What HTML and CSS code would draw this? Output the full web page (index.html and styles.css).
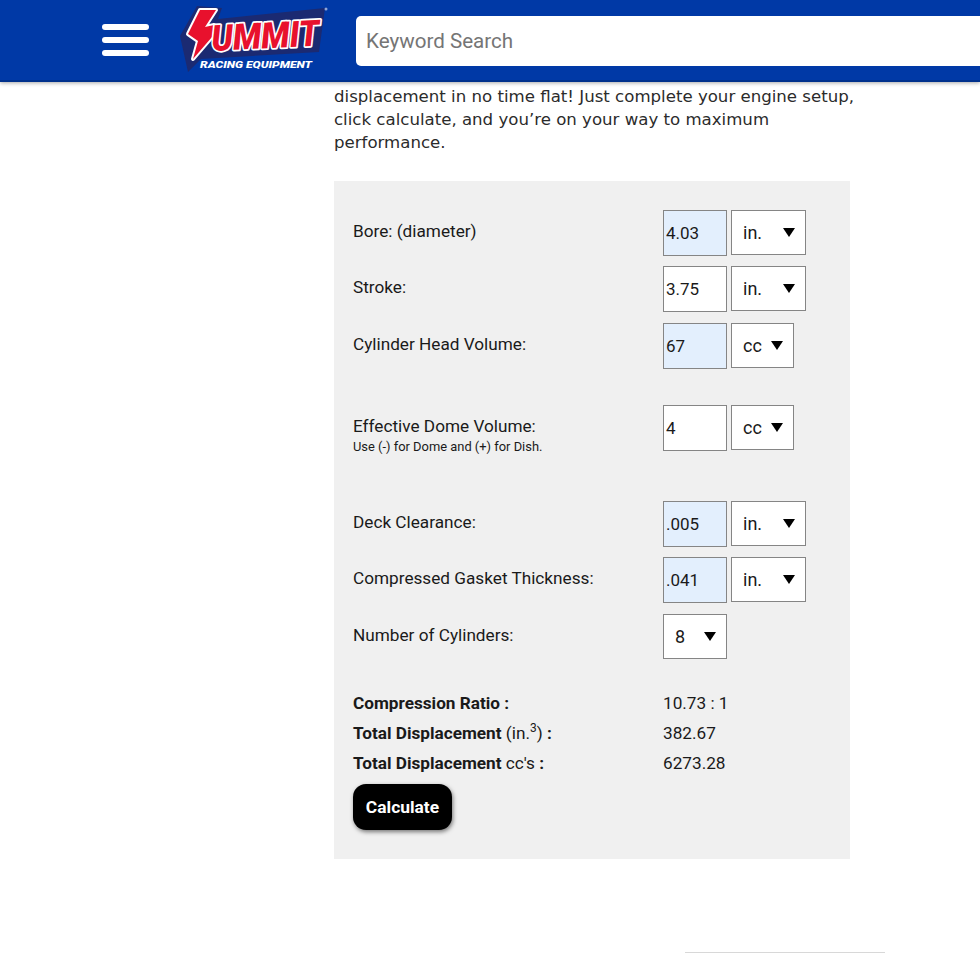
FILE: index.html
```html
<!DOCTYPE html>
<html lang="en">
<head>
    <meta charset="UTF-8">
    <meta name="viewport" content="width=device-width, initial-scale=1.0">
    <title>Compression Ratio Calculator</title>
    <link rel="stylesheet" href="styles.css">
</head>
<body>

<header class="header">
    <div class="menu-icon"><span></span><span></span><span></span></div>
    <svg class="logo" viewBox="178 8 154 68" width="154" height="68" role="img" aria-label="Summit Racing Equipment">
        <polygon fill="#1b2a72" points="197,8 222,10 218,21 325,10 319,54 201,61 188,74 180,38"/>
        <circle fill="#8fa6d8" cx="326" cy="11" r="1.5"/>
        <polygon class="logo-bolt" points="200,12 216,12 205,29 214,27 212,39 193,61 198,43 188,36"/>
        <text class="logo-name" x="212" y="53" textLength="108" lengthAdjust="spacingAndGlyphs" transform="rotate(-3 212 53)">UMMIT</text>
        <text class="logo-tag" x="200" y="70" textLength="112" lengthAdjust="spacingAndGlyphs">RACING EQUIPMENT</text>
    </svg>
    <input class="search" type="text" placeholder="Keyword Search">
</header>

<main class="content">
    <p class="intro">displacement in no time flat! Just complete your engine setup, click calculate, and you’re on your way to maximum performance.</p>

    <form class="calc">
        <div class="row">
            <label class="row-label">Bore: (diameter)</label>
            <input class="num filled" type="text" value="4.03">
            <div class="pick wide"><select><option>in.</option></select></div>
        </div>
        <div class="row">
            <label class="row-label">Stroke:</label>
            <input class="num" type="text" value="3.75">
            <div class="pick wide"><select><option>in.</option></select></div>
        </div>
        <div class="row">
            <label class="row-label">Cylinder Head Volume:</label>
            <input class="num filled" type="text" value="67">
            <div class="pick"><select><option>cc</option></select></div>
        </div>

        <div class="row dome">
            <label class="row-label">Effective Dome Volume:<small>Use (-) for Dome and (+) for Dish.</small></label>
            <input class="num" type="text" value="4">
            <div class="pick"><select><option>cc</option></select></div>
        </div>

        <div class="row">
            <label class="row-label">Deck Clearance:</label>
            <input class="num filled" type="text" value=".005">
            <div class="pick wide"><select><option>in.</option></select></div>
        </div>
        <div class="row">
            <label class="row-label">Compressed Gasket Thickness:</label>
            <input class="num filled" type="text" value=".041">
            <div class="pick wide"><select><option>in.</option></select></div>
        </div>
        <div class="row">
            <label class="row-label">Number of Cylinders:</label>
            <div class="pick cyl"><select><option>8</option></select></div>
        </div>

        <div class="results">
            <div class="result"><span class="result-label"><b>Compression Ratio :</b></span><span>10.73 : 1</span></div>
            <div class="result"><span class="result-label"><b>Total Displacement</b> (in.<sup>3</sup>) <b>:</b></span><span>382.67</span></div>
            <div class="result"><span class="result-label"><b>Total Displacement</b> cc's <b>:</b></span><span>6273.28</span></div>
        </div>

        <button class="calc-btn" type="button">Calculate</button>
    </form>

    <div class="foot-line"></div>
</main>

</body>
</html>
```

FILE: styles.css
```css
* {
    box-sizing: border-box;
}
body {
    margin: 0;
    height: 953px;
    overflow: hidden;
    background: #fff;
    color: #1a1a1a;
    font-family: Roboto, "Liberation Sans", sans-serif;
    font-size: 17.2px;
}
.header {
    height: 82px;
    background: #0039a6;
    border-bottom: 2px solid #00308c;
    box-shadow: 0 1px 4px rgba(0, 0, 0, 0.35);
    display: flex;
    align-items: center;
    padding-left: 102px;
    overflow: hidden;
}
.menu-icon {
    width: 47px;
    display: flex;
    flex-direction: column;
    gap: 7px;
    flex-shrink: 0;
}
.menu-icon span {
    height: 6px;
    background: #fff;
    border-radius: 3px;
}
.logo {
    margin-left: 29px;
    margin-top: -1px;
    flex-shrink: 0;
}
.logo-bolt {
    fill: #e8112d;
    stroke: #fff;
    stroke-width: 4px;
    stroke-linejoin: round;
    paint-order: stroke;
}
.logo-name {
    font-family: Roboto, sans-serif;
    font-size: 36px;
    font-weight: 900;
    font-style: italic;
    fill: #e8112d;
    stroke: #fff;
    stroke-width: 3.5px;
    stroke-linejoin: round;
    paint-order: stroke;
}
.logo-tag {
    font-family: Roboto, sans-serif;
    font-size: 9px;
    font-weight: 900;
    font-style: italic;
    fill: #fff;
}
.search {
    margin-left: 24px;
    margin-top: 2px;
    width: 700px;
    height: 50px;
    flex-shrink: 0;
    border: 0;
    border-radius: 5px;
    background: #fff;
    padding: 0 10px;
    font-family: Roboto, sans-serif;
    font-size: 20.6px;
}
.search::placeholder {
    color: #757575;
    opacity: 1;
}
.content {
    margin-left: 334px;
    width: 516px;
}
.intro {
    margin: 3px 0 26.5px;
    width: 525px;
    font-family: "DejaVu Sans", sans-serif;
    font-size: 16.6px;
    line-height: 23px;
    color: #2b2b2b;
}
.calc {
    height: 678px;
    background: #f0f0f0;
    padding: 29px 19px 0;
}
.row {
    display: flex;
    align-items: flex-start;
    height: 46px;
    margin-bottom: 10.5px;
}
.row.dome {
    margin-top: 36px;
    margin-bottom: 50px;
}
.row-label {
    width: 310px;
    padding-top: 12px;
    line-height: 19px;
}
.row-label small {
    display: block;
    font-size: 12.9px;
    line-height: 21px;
}
.num {
    width: 64px;
    height: 46px;
    border: 1px solid #858585;
    background: #fff;
    padding: 0 2px;
    font-family: Roboto, sans-serif;
    font-size: 17px;
    color: #1a1a1a;
    border-radius: 0;
}
.num.filled {
    background: #e3effd;
}
.pick {
    position: relative;
    width: 63px;
    height: 45px;
    margin-left: 4px;
}
.pick.wide {
    width: 75px;
}
.pick.cyl {
    width: 64px;
    margin-left: 0;
}
.pick select {
    width: 100%;
    height: 100%;
    appearance: none;
    border: 1px solid #858585;
    border-radius: 0;
    background: #fff;
    padding: 0 0 0 11px;
    font-family: Roboto, sans-serif;
    font-size: 18px;
    color: #1a1a1a;
}
.pick::after {
    content: "";
    position: absolute;
    right: 11px;
    top: 18px;
    border-left: 6px solid transparent;
    border-right: 6px solid transparent;
    border-top: 9px solid #000;
}
.results {
    margin-top: 28px;
}
.result {
    display: flex;
    height: 30px;
    align-items: center;
}
.result-label {
    width: 310px;
}
.result sup {
    font-size: 12px;
    line-height: 0;
}
.calc-btn {
    display: block;
    margin-top: 6px;
    width: 99px;
    height: 46px;
    border: 0;
    border-radius: 13px;
    background: #000;
    color: #fff;
    font-family: Roboto, sans-serif;
    font-size: 17.4px;
    font-weight: 700;
    box-shadow: 1px 2px 4px rgba(0, 0, 0, 0.5);
}
.foot-line {
    width: 200px;
    height: 1px;
    margin: 93px 0 0 351px;
    background: #d8d8d8;
}
```
